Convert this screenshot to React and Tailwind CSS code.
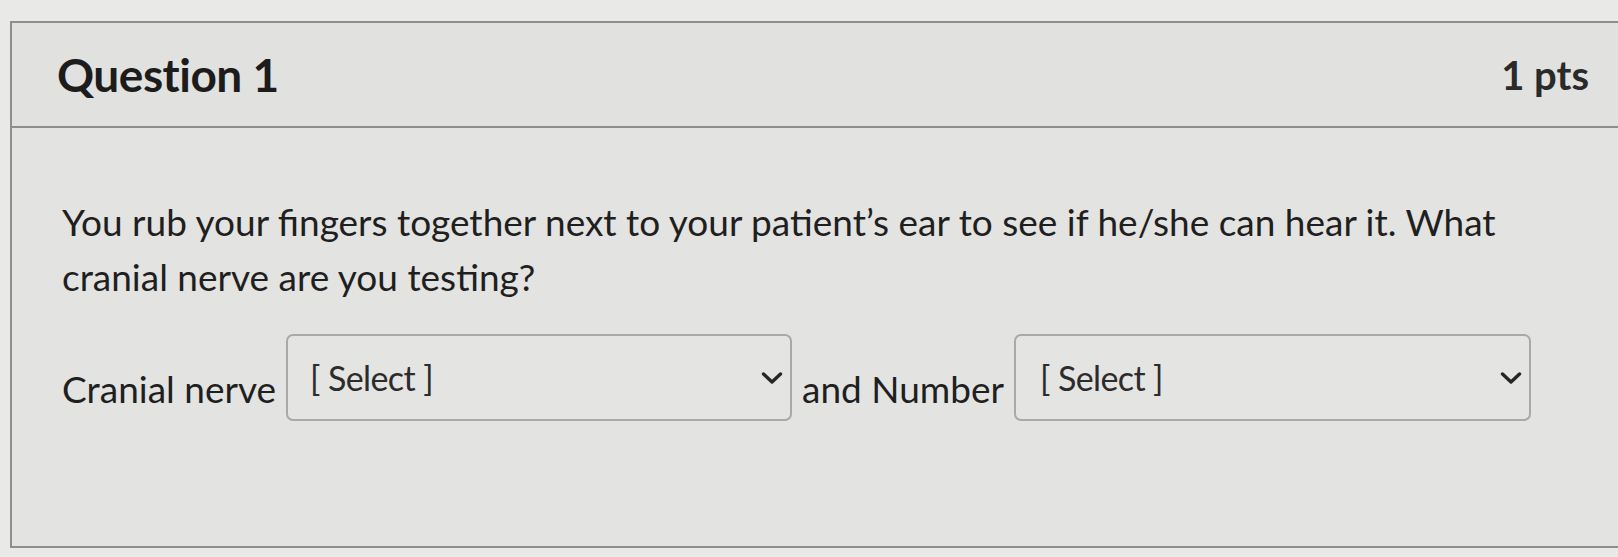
import React from "react";

function Chevron() {
  return (
    <svg width="22" height="12" viewBox="0 0 22 12" className="shrink-0">
      <path d="M2.5 2 L11 10 L19.5 2" fill="none" stroke="#262626" strokeWidth="3.4" strokeLinecap="round" strokeLinejoin="round" />
    </svg>
  );
}

function Select({ w, pl }) {
  return (
    <div
      className={`${w} h-[87px] shrink-0 rounded-[7px] border-2 border-[#a9a9a7] bg-[#e4e4e2] flex items-start justify-between pt-[22px] pr-[7px] ${pl}`}
    >
      <span className="text-[34px] leading-[40px] text-[#2c2c2c] tracking-[-0.6px]">[ Select ]</span>
      <span className="pt-[14px]">
        <Chevron />
      </span>
    </div>
  );
}

export default function App() {
  return (
    <div
      className="w-[1618px] h-[557px] overflow-hidden bg-[#e9e9e7] pt-[21px] pl-[10px]"
      style={{ fontFamily: "Lato, 'Liberation Sans', sans-serif" }}
    >
      <div className="w-[1608px] h-[527px] border-2 border-r-0 border-[#8e8e8c] bg-[#e3e3e1]">
        <div className="h-[105px] flex items-center justify-between pl-[45px] pr-[29px] border-b-2 border-[#8e8e8c] bg-[#e1e1df]">
          <span className="text-[46px] font-bold text-[#1c1c1c] tracking-[-0.5px]">Question 1</span>
          <span className="text-[40px] font-bold text-[#2a2a2a]">1 pts</span>
        </div>
        <div className="pl-[50px] pr-[40px] pt-[66px]">
          <p className="text-[37px] leading-[55px] text-[#1f1f1f] w-[1500px]">
            You rub your fingers together next to your patient’s ear to see if he/she can hear it. What cranial nerve are you testing?
          </p>
          <div className="mt-[30px] flex items-start gap-[10px] text-[37px] text-[#1f1f1f]">
            <span className="pt-[33px] leading-[44px]">Cranial nerve</span>
            <Select w="w-[506px]" pl="pl-[22px]" />
            <span className="pt-[33px] leading-[44px]">and Number</span>
            <Select w="w-[517px]" pl="pl-[24px]" />
          </div>
        </div>
      </div>
    </div>
  );
}
